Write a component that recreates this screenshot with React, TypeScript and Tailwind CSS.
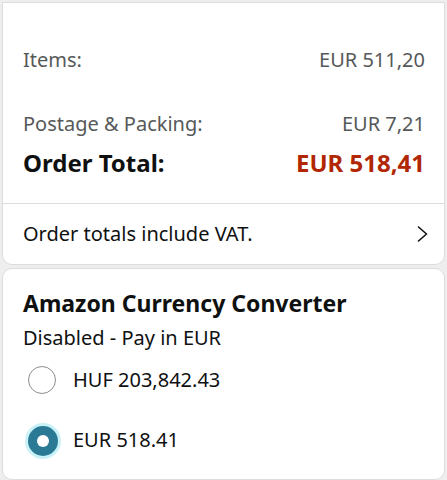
type Line = {
  label: string
  value: string
}

const lines: Line[] = [
  { label: 'Items:', value: 'EUR 511,20' },
  { label: 'Postage & Packing:', value: 'EUR 7,21' }
]

export default function App() {
  return (
    <div
      className="min-h-[480px] w-[447px] bg-[#eeeeee] px-[2px] pt-[2px] text-[#0f1111]"
      style={{ fontFamily: '"Noto Sans", "Open Sans", sans-serif' }}
    >
      <div className="rounded-b-[10px] border border-[#dddddd] bg-white">
        <div className="pl-[20px] pr-[19px] pt-[44px] pb-[25px]">
          <Row {...lines[0]} />
          <div className="mt-[38px]">
            <Row {...lines[1]} />
          </div>
          <div className="mt-[11px] flex h-[30px] items-center justify-between text-[24px] font-bold">
            <span>Order Total:</span>
            <span className="text-[#b12704]">EUR 518,41</span>
          </div>
        </div>
        <div className="flex h-[61px] items-center justify-between border-t border-[#dddddd] pl-[20px] pr-[16px]">
          <span className="text-[20px]">Order totals include VAT.</span>
          <svg width="11" height="16" viewBox="0 0 11 16" fill="none" stroke="#0f1111" strokeWidth="1.6" strokeLinecap="round" strokeLinejoin="round">
            <polyline points="1.5,1 9.5,8 1.5,15" />
          </svg>
        </div>
      </div>

      <div className="mt-[3px] h-[212px] rounded-[10px] border border-[#dddddd] bg-white pl-[20px] pr-[19px] pt-[20px]">
        <h2 className="text-[23px] font-bold leading-[28px]">Amazon Currency Converter</h2>
        <p className="mt-[8px] text-[20px] leading-[26px]">Disabled - Pay in EUR</p>
        <div className="mt-[15px] flex flex-col gap-[32px]">
          <Radio label="HUF 203,842.43" />
          <Radio label="EUR 518.41" checked />
        </div>
      </div>
    </div>
  )
}

function Row({ label, value }: Line) {
  return (
    <div className="flex h-[26px] items-center justify-between text-[20px] text-[#565959]">
      <span>{label}</span>
      <span>{value}</span>
    </div>
  )
}

function Radio({ label, checked = false }: { label: string; checked?: boolean }) {
  return (
    <div className="flex h-[28px] items-center gap-[17px] pl-[5px]">
      <span className="grid h-[28px] w-[28px] place-items-center">
        {checked ? (
          <span className="grid h-[30px] w-[30px] shrink-0 place-items-center rounded-full bg-[#2b7a95] ring-[3px] ring-[#c9f1f8]">
            <span className="h-[12px] w-[12px] rounded-full bg-white" />
          </span>
        ) : (
          <span className="h-[28px] w-[28px] rounded-full border-[1.5px] border-[#8d8d8d]" />
        )}
      </span>
      <span className="text-[20px]">{label}</span>
    </div>
  )
}
